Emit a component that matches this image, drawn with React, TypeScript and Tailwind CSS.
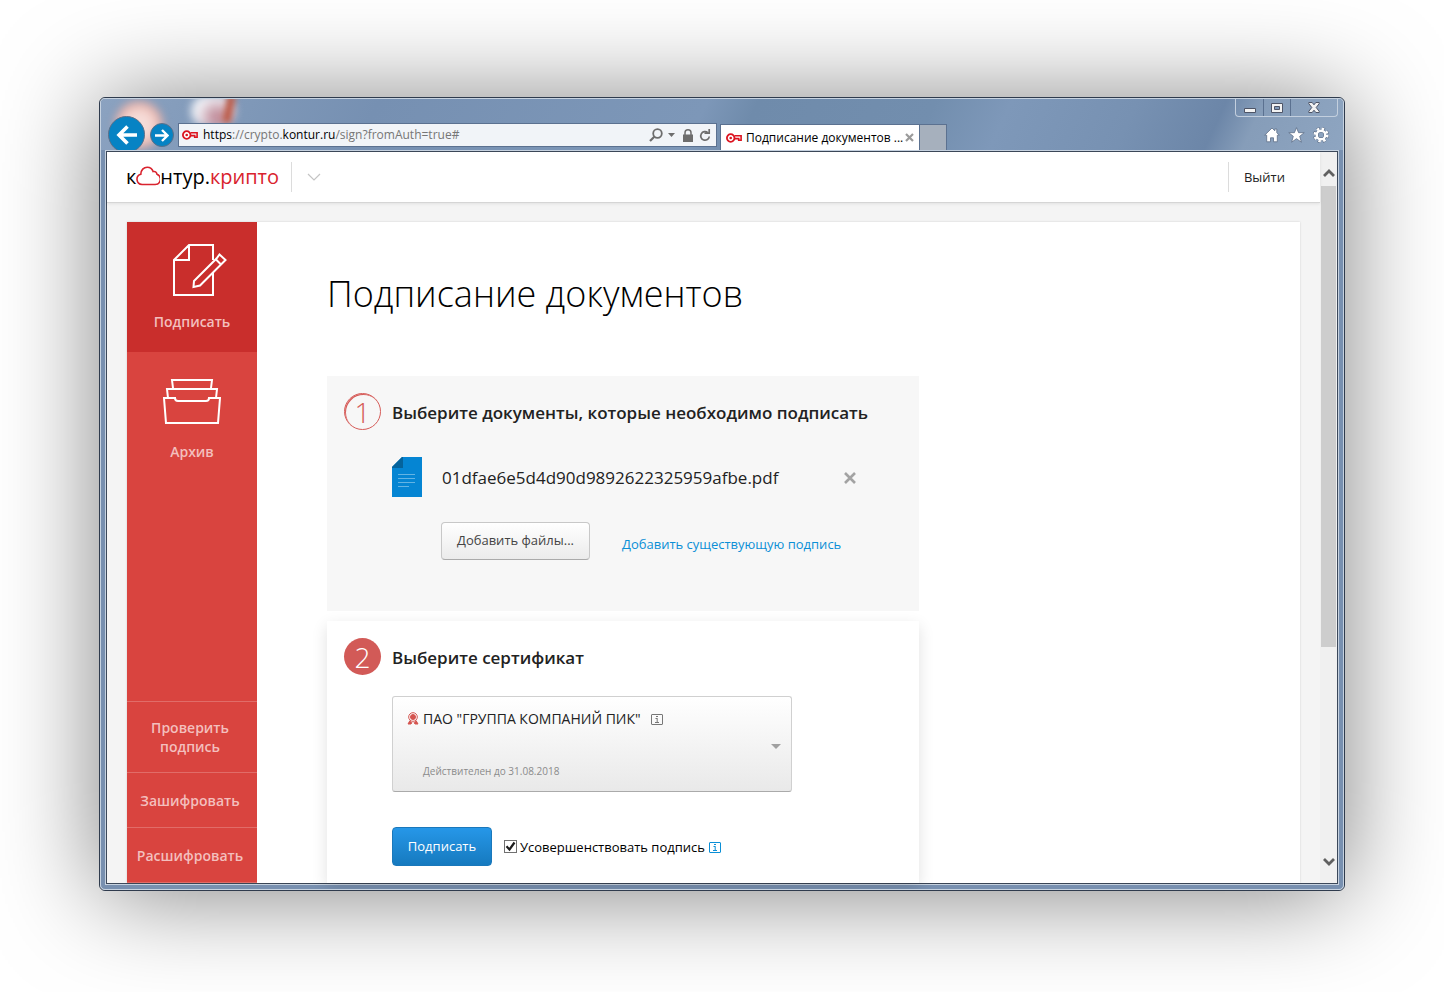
import React, { useState } from 'react';

function KeyIcon() {
  return (
    <svg width="16" height="10" viewBox="0 0 16 10" className="shrink-0" fill="none" stroke="#dc1420" aria-hidden="true">
      <path d="M8.5 2.7h6.600v4.600h-2.400V5.600H8.800" strokeWidth="1.600" />
      <circle cx="4.700" cy="5" r="3.800" strokeWidth="1.800" fill="#fff" />
      <circle cx="4.700" cy="5" r="1.300" fill="#dc1420" stroke="none" />
    </svg>
  );
}

function InfoIcon({ className }: { className: string }) {
  return (
    <svg width="12" height="12" viewBox="0 0 12 12" className={className} fill="none" stroke="currentColor" aria-hidden="true">
      <rect x="0.5" y="0.5" width="11" height="10" rx="0.5" />
      <path d="M5 2.5h2M4.5 4.5h2M6.2 4.5v4M4 8.5h4" />
    </svg>
  );
}

function Chrome() {
  return (
    <div className="relative flex h-[51px] items-start overflow-hidden bg-[linear-gradient(115deg,#8ba2c0_0%,#7f98b8_12%,#7690b2_22%,#7d97b8_48%,#6f8bab_52%,#728eae_66%,#7e98b9_72%,#7791b2_82%,#6c86a8_89%,#869db9_92%,#8ea5c1_100%)] pl-[7px]">
      {/* desktop icons showing through the glass */}
      <div className="absolute left-[14px] top-[2px] h-12 w-12 rounded-full bg-[radial-gradient(circle,#f6dcd8_35%,#e3a9a0_70%,#c9a38f_100%)] blur-[4px]" />
      <div className="absolute left-[90px] -top-1 h-8 w-11 rounded-full bg-[radial-gradient(circle_at_60%_70%,#c08a98_10%,#f0f1f6_60%)] blur-[4px]" />
      <div className="absolute left-[124px] -top-1 h-7 w-2 rotate-12 bg-[#b9523e] blur-[3px]" />

      <button aria-label="Назад" className="relative mt-[17px] flex size-[37px] shrink-0 items-center justify-center rounded-full border border-[#5d6f88] bg-[#0683c4] text-white">
        <svg width="22" height="20" viewBox="0 0 22 20" fill="none" stroke="currentColor" strokeWidth="3.6">
          <path d="M21 10H4M11.5 1.5 3 10l8.500 8.500" />
        </svg>
      </button>
      <button aria-label="Вперёд" className="relative ml-[5px] mt-6 flex size-6 shrink-0 items-center justify-center rounded-full border border-[#5d6f88] bg-[#0683c4] text-white">
        <svg width="14" height="13" viewBox="0 0 14 13" fill="none" stroke="currentColor" strokeWidth="2.400">
          <path d="M0 6.500h12M7 1l5.500 5.500L7 12" />
        </svg>
      </button>

      <div className="relative ml-1 mt-6 flex h-6 max-w-[539px] flex-1 items-center border border-[#5b7190] bg-[#f1f4f8] px-[3px] text-xs text-[#767676]">
        <KeyIcon />
        <div className="ml-[5px] flex-1 truncate">
          <span className="text-black">https</span>://crypto.<span className="text-black">kontur.ru</span>/sign?fromAuth=true#
        </div>
        <div className="flex shrink-0 items-center gap-[5px] pr-[2px]">
          <svg width="14" height="14" viewBox="0 0 14 14" fill="none" stroke="#6d6d6d" strokeWidth="1.800">
            <circle cx="8.500" cy="5.500" r="4.300" />
            <path d="M5.300 8.700 1 13" strokeWidth="2.200" />
          </svg>
          <svg width="7" height="4" viewBox="0 0 7 4" fill="#6d6d6d"><path d="M0 0h7L3.500 4z" /></svg>
          <svg width="12" height="13" viewBox="0 0 12 13" fill="#6d6d6d" className="ml-[2px]">
            <path d="M1 5.500h10V13H1z" />
            <path d="M3 6V3.800a3 3 0 0 1 6 0V6" fill="none" stroke="#6d6d6d" strokeWidth="1.500" />
          </svg>
          <svg width="12" height="13" viewBox="0 0 12 13" fill="none" stroke="#6d6d6d" strokeWidth="1.700">
            <path d="M8.800 3.600A4.300 4.300 0 1 0 10.300 7.500" />
            <path d="M5.500 4.200h4.700V0" />
          </svg>
        </div>
      </div>

      <div className="ml-[3px] mt-[25px] flex h-[26px] w-[200px] shrink-0 items-center border border-b-0 border-[#5b7190] bg-white pl-[5px] pr-[5px] text-xs text-black">
        <KeyIcon />
        <span className="ml-1 flex-1 whitespace-nowrap">Подписание документов ...</span>
        <button aria-label="Закрыть вкладку" className="text-[#9b9b9b]">
          <svg width="9" height="9" viewBox="0 0 9 9" stroke="currentColor" strokeWidth="2.200"><path d="m1 1 7 7M8 1 1 8" /></svg>
        </button>
      </div>
      <button aria-label="Новая вкладка" className="mt-[25px] h-[26px] w-[27px] shrink-0 border border-b-0 border-l-0 border-[#5b7190] bg-[#a6b0bd]" />

      <div className="ml-auto mr-[5px] flex shrink-0 flex-col items-end">
        <div className="flex h-[18px] rounded-b border border-t-0 border-[#c3cfde] text-white">
          <button aria-label="Свернуть" className="flex w-7 items-center justify-center border-r border-[#5b7190]">
            <svg width="12" height="10" viewBox="0 0 12 10"><path d="M.5 5.500h11v4H.5z" fill="#f3f3f3" stroke="#4e5567" /></svg>
          </button>
          <button aria-label="Развернуть" className="flex w-[27px] items-center justify-center border-r border-[#5b7190]">
            <svg width="12" height="10" viewBox="0 0 12 10"><path d="M.5.5h11v9H.5z" fill="#f3f3f3" stroke="#4e5567" /><path d="M3.500 3.500h5v3h-5z" fill="#7f98b8" stroke="#4e5567" /></svg>
          </button>
          <button aria-label="Закрыть" className="flex w-[46px] items-center justify-center">
            <svg width="12" height="11" viewBox="0 0 12 11"><path d="M.8.5h3.400L6 2.800 7.800.5h3.400v1.200L8.200 5.500l3 3.800v1.200H7.800L6 8.200l-1.800 2.300H.8V9.300l3-3.800-3-3.800z" fill="#f3f3f3" stroke="#4e5567" /></svg>
          </button>
        </div>
        <div className="mr-[9px] mt-[10px] flex items-center gap-2">
          <button aria-label="Домой">
            <svg width="16" height="16" viewBox="0 0 16 16"><path d="M8 1 .7 8.200h2v6.600h3.800v-4h3v4h3.800V8.200h2L12.800 5.700V2h-2v1.800z" fill="#fff" stroke="#5e6f88" strokeWidth=".8" /></svg>
          </button>
          <button aria-label="Избранное">
            <svg width="17" height="16" viewBox="0 0 17 16"><path d="m8.500.7 2.100 5h5.600l-4.500 3.600 1.700 5.900-4.900-3.500-4.900 3.500 1.700-5.900L.8 5.700h5.600z" fill="#fff" stroke="#5e6f88" strokeWidth=".8" /></svg>
          </button>
          <button aria-label="Сервис">
            <svg width="16" height="16" viewBox="0 0 16 16" fill="none">
              <circle cx="8" cy="8" r="6.400" stroke="#5e6f88" strokeWidth="3.200" strokeDasharray="3 2.030" />
              <circle cx="8" cy="8" r="4.300" stroke="#5e6f88" strokeWidth="3.600" />
              <circle cx="8" cy="8" r="6.200" stroke="#fff" strokeWidth="2.600" strokeDasharray="2.430 2.430" />
              <circle cx="8" cy="8" r="4.300" stroke="#fff" strokeWidth="2.400" />
            </svg>
          </button>
        </div>
      </div>
    </div>
  );
}

function SiteHeader() {
  return (
    <header className="relative flex h-[51px] shrink-0 items-center border-b border-[#d5d5d5] bg-white pl-[19px] shadow-[0_1px_3px_rgba(0,0,0,0.08)]">
      <a href="#" aria-label="контур.крипто" className="flex items-center text-xl leading-6 text-black">
        <span>к</span>
        <svg width="24" height="20" viewBox="0 0 24 20" fill="none" stroke="#d9232e" strokeWidth="1.600" className="mb-[3px]">
          <path d="M6 18.500a5.200 5.200 0 0 1-1.200-10.200C4.800 4 7.800 1.200 11.200 1.200c3 0 5.100 1.700 5.900 4.400 1.800-.5 3.500.5 3.900 2.700a5.300 5.300 0 0 1-2.200 10.200z" />
        </svg>
        <span>нтур.</span>
        <span className="text-[#d9232e]">крипто</span>
      </a>
      <div className="ml-3 h-[30px] w-px bg-[#dcdcdc]" />
      <button aria-label="Сервисы" className="ml-[15px] text-[#c4c4c4]">
        <svg width="14" height="8" viewBox="0 0 14 8" fill="none" stroke="currentColor" strokeWidth="1.200"><path d="m1 1 6 6 6-6" /></svg>
      </button>
      <div className="ml-auto h-[30px] w-px bg-[#dcdcdc]" />
      <a href="#" className="ml-[15px] mr-[35px] text-[13px] leading-5 text-[#222]">Выйти</a>
    </header>
  );
}

const bottomLinks = ['Проверить подпись', 'Зашифровать', 'Расшифровать'];

function Sidebar() {
  return (
    <nav className="flex w-[130px] shrink-0 flex-col bg-[#d9443f] text-center text-sm font-semibold text-[#f3bfbd]">
      <a href="#" className="flex h-[130px] flex-col items-center bg-[#c92e2c] pt-[21px]">
        <svg width="56" height="56" viewBox="0 0 56 56" fill="none" stroke="#fff" strokeWidth="2" className="ml-4">
          <path d="M41 17V2H17L2 17v35h39V29M17 2v15H2" />
          <path d="m22 38 22.500-22.500 3-4 6 5.500-4 4L28 42.500 21.500 44z" />
          <path d="m43.500 16 5.500 5.500" />
        </svg>
        <span className="mt-[13px] leading-5">Подписать</span>
      </a>
      <a href="#" className="flex h-[130px] flex-col items-center pt-[26px]">
        <svg width="58" height="48" viewBox="0 0 58 48" fill="none" stroke="#fff" strokeWidth="2">
          <path d="M10 10 9 2h40l-1 8" />
          <path d="M5 20 4 11h50l-1 9" />
          <path d="M1 20h11c0 2 1.500 3 3 3h28c1.500 0 3-1 3-3h11l-2 25H3z" />
        </svg>
        <span className="mt-4 leading-5">Архив</span>
      </a>
      <div className="mt-auto border-b border-[#e16c68]">
        {bottomLinks.map((label) => (
          <a key={label} href="#" className="flex min-h-[55px] items-center justify-center border-t border-[#e16c68] py-4 pl-2 pr-3 leading-[19px]">
            {label}
          </a>
        ))}
      </div>
    </nav>
  );
}

function Documents() {
  return (
    <section className="flex h-[235px] gap-[11px] bg-[#f7f7f7] p-[17px]">
      <div className="flex size-[37px] shrink-0 items-center justify-center rounded-full border border-[#d65c59] text-[28px] font-light leading-none text-[#d65c59] shadow-[inset_1px_1px_0_#d65c59]">1</div>
      <div className="flex-1">
        <h2 className="text-[17px] font-semibold leading-[39px] text-[#222]">Выберите документы, которые необходимо подписать</h2>
        <div className="mt-[25px] flex items-center">
          <svg width="30" height="40" viewBox="0 0 30 40">
            <path d="M10 0h20v40H0V10z" fill="#0585d3" />
            <path d="M10 0h1v11H0v-1z" fill="#05639c" />
            <path d="M6 17.500h17M6 21.500h17M6 25.500h17M6 29.500h11" stroke="#63b4e4" />
          </svg>
          <div className="ml-5 flex items-center pt-[2px]">
            <span className="w-[401px] text-[17px] leading-6 text-[#222]">01dfae6e5d4d90d9892622325959afbe.pdf</span>
            <button aria-label="Удалить файл" className="text-[#a3a3a3]">
              <svg width="14" height="14" viewBox="0 0 14 14" stroke="currentColor" strokeWidth="2.600"><path d="m2 2 10 10M12 2 2 12" /></svg>
            </button>
          </div>
        </div>
        <div className="ml-[49px] mt-[25px] flex items-center text-[13px]">
          <button className="h-[38px] w-[149px] rounded border border-[#c8c8c8] border-b-[#aaa] bg-linear-to-b from-white to-[#ebebeb] text-[#444]">Добавить файлы...</button>
          <a href="#" className="ml-8 mt-[6px] leading-5 text-[#0b8fd6]">Добавить существующую подпись</a>
        </div>
      </div>
    </section>
  );
}

function Certificate() {
  const [improve, setImprove] = useState(true);

  return (
    <section className="mt-[10px] flex flex-1 gap-[11px] bg-white p-[17px] pb-0 shadow-[0_5px_15px_rgba(0,0,0,0.12)]">
      <div className="flex size-[37px] shrink-0 items-center justify-center rounded-full bg-[#d25a57] text-[28px] font-light leading-none text-white">2</div>
      <div className="flex-1">
        <h2 className="text-[17px] font-semibold leading-[39px] text-[#222]">Выберите сертификат</h2>
        <div className="relative mt-[19px] h-24 w-[400px]">
          <select
            aria-label="Сертификат"
            className="size-full appearance-none rounded-[3px] border border-[#d0d0d0] border-b-[#aaa] bg-linear-to-b from-white to-[#e9e9e9] pb-[50px] pl-[30px] text-sm font-medium text-[#222]"
          >
            <option>ПАО "ГРУППА КОМПАНИЙ ПИК"</option>
          </select>
          <svg width="12" height="13" viewBox="0 0 12 13" className="pointer-events-none absolute left-[15px] top-4" fill="none" stroke="#d4544f">
            <path d="M3 8.500 1 12h3l1-1.500M9 8.500l2 3.500H8l-1-1.500" fill="#d4544f" />
            <circle cx="6" cy="5" r="4.300" fill="#fff" />
            <circle cx="6" cy="5" r="2.500" fill="#d4544f" />
          </svg>
          <InfoIcon className="pointer-events-none absolute left-[259px] top-[18px] text-[#777]" />
          <span className="pointer-events-none absolute bottom-[13px] left-[31px] text-[10px] leading-4 text-[#8b8b8b]">Действителен до 31.08.2018</span>
          <svg width="10" height="5" viewBox="0 0 10 5" className="pointer-events-none absolute right-[11px] top-12" fill="#a0a0a0"><path d="M0 0h10L5 5z" /></svg>
        </div>
        <div className="mt-[35px] flex items-center text-[13px]">
          <button className="h-[39px] w-[100px] rounded border border-[#1a78bb] bg-linear-to-b from-[#2697e8] to-[#167abf] text-white">Подписать</button>
          <label className="ml-3 flex items-center text-black">
            <span className="relative size-[13px]">
              <input
                type="checkbox"
                checked={improve}
                onChange={(e) => setImprove(e.target.checked)}
                className="block size-[13px] appearance-none border border-[#707070] bg-white"
              />
              {improve && (
                <svg width="13" height="13" viewBox="0 0 13 13" className="pointer-events-none absolute left-0 top-0" fill="none" stroke="#1c1c1c" strokeWidth="2.200"><path d="m2.500 6.300 3 3.200L10.500 2.500" /></svg>
              )}
            </span>
            <span className="ml-[3px] leading-5">Усовершенствовать подпись</span>
          </label>
          <InfoIcon className="ml-1 mt-[2px] text-[#0b8fd6]" />
        </div>
      </div>
    </section>
  );
}

function Scrollbar() {
  return (
    <div className="flex w-[17px] shrink-0 flex-col items-center bg-[#f0f0f0] text-[#606060]">
      <button aria-label="Вверх" className="flex h-[34px] items-center pt-2">
        <svg width="12" height="10" viewBox="0 0 12 10" fill="none" stroke="currentColor" strokeWidth="2.800"><path d="m1 8 5-5 5 5" /></svg>
      </button>
      <div className="h-[63%] w-[15px] bg-[#cdcdcd]" />
      <button aria-label="Вниз" className="mt-auto flex h-[34px] items-center pb-2">
        <svg width="12" height="10" viewBox="0 0 12 10" fill="none" stroke="currentColor" strokeWidth="2.800"><path d="m1 2 5 5 5-5" /></svg>
      </button>
    </div>
  );
}

export default function App() {
  return (
    <div className="flex min-h-screen bg-white px-[99px] pb-[101px] pt-[97px] font-['Open_Sans','Noto_Sans',sans-serif]">
      <div className="flex min-w-0 flex-1 flex-col rounded-md border border-[#2f3b4d] bg-[#c6d2e0] shadow-[0_3px_100px_rgba(0,0,0,0.5)]">
        <div className="flex flex-1 flex-col overflow-hidden rounded-[5px] border border-[#c6d2e0] bg-[#7890b0]">
          <Chrome />
          <div className="mx-1 mb-1 flex flex-1 border border-[#c6d2e0]">
            <div className="flex flex-1 border border-[#3c485a] bg-[#f4f4f4]">
              <div className="flex min-w-0 flex-1 flex-col">
                <SiteHeader />
                <div className="flex flex-1 px-5 pt-[19px]">
                  <div className="flex flex-1 bg-white shadow-[0_0_2px_rgba(0,0,0,0.15)]">
                    <Sidebar />
                    <main className="flex flex-1 flex-col pl-[70px]">
                      <h1 className="mt-12 text-4xl font-light leading-[48px] text-black">Подписание документов</h1>
                      <div className="mt-[58px] flex w-[592px] flex-1 flex-col">
                        <Documents />
                        <Certificate />
                      </div>
                    </main>
                  </div>
                </div>
              </div>
              <Scrollbar />
            </div>
          </div>
        </div>
      </div>
    </div>
  );
}
